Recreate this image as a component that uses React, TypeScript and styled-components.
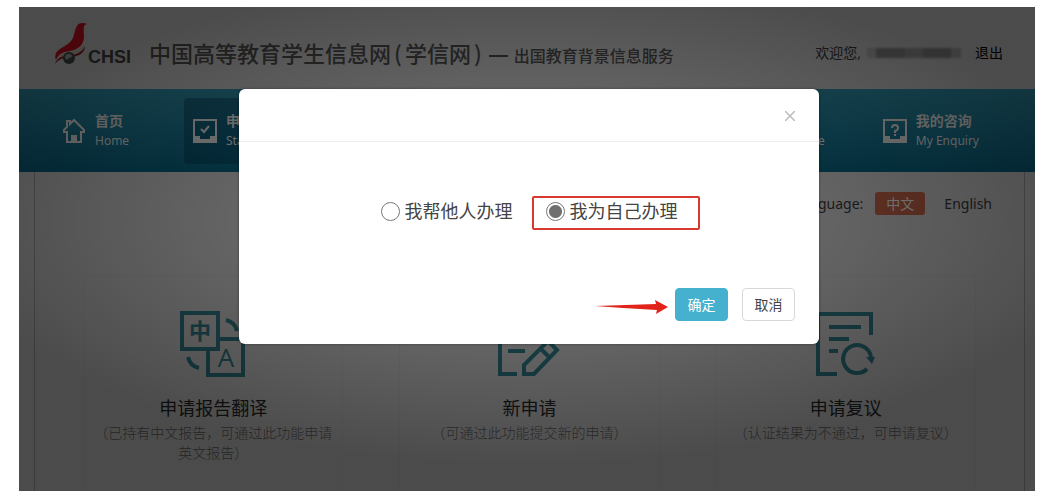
import React, { useState } from 'react';
import styled, { createGlobalStyle } from 'styled-components';

const GlobalStyle = createGlobalStyle`
  * { box-sizing: border-box; }
  body {
    margin: 0;
    background: #fff;
    font-family: "Noto Sans", "Noto Sans CJK SC", sans-serif;
    font-size: 14px;
    color: #333;
  }
  h1, h2, p { margin: 0; font-weight: 400; }
  button, input { font-family: inherit; }
`;

const Frame = styled.div`
  position: relative;
  margin: 7px 6px 4px 19px;
  background: #bcbcbc;
`;

const Header = styled.header`
  display: flex;
  align-items: flex-end;
  justify-content: space-between;
  height: 82px;
  padding: 0 32px 24px 36px;
`;

const Brand = styled.div`
  display: flex;
  align-items: flex-end;
  white-space: nowrap;
`;

const LogoName = styled.span`
  margin-right: 18px;
  font: bold 18px/16px "Liberation Sans", sans-serif;
  color: #3a3a3a;
`;

const SiteTitle = styled.h1`
  font-size: 22px;
  line-height: 26px;
  font-weight: 500;
  font-family: "Noto Sans CJK SC", sans-serif;
  color: #484848;
`;

const Paren = styled.span`
  padding: 0 3px;
`;

const Dash = styled.span`
  width: 19px;
  height: 2px;
  margin: 0 6px 8px 4px;
  background: #444;
`;

const SubTitle = styled.span`
  font-size: 16px;
  line-height: 20px;
  font-weight: 500;
  font-family: "Noto Sans CJK SC", sans-serif;
  color: #484848;
`;

const Account = styled.div`
  display: flex;
  align-items: center;
  line-height: 24px;
  color: #333;
  white-space: nowrap;
`;

const MaskedName = styled.span`
  width: 94px;
  height: 10px;
  margin: 0 14px 0 6px;
  filter: blur(1px);
  background: linear-gradient(90deg, #a4a4a4 0 9px, #7c7c7c 9px 38px, #8c8c8c 38px 56px, #7c7c7c 56px 84px, #999 84px);
`;

const Logout = styled.a`
  color: #000;
  text-decoration: none;
`;

const Nav = styled.nav`
  display: flex;
  gap: 40px;
  height: 83px;
  padding: 9px 47px 8px 34px;
  background: linear-gradient(#2a869e, #085a76);
`;

const NavItem = styled.a<{ $active?: boolean; $pushed?: boolean }>`
  display: flex;
  align-items: center;
  gap: 9px;
  min-width: 91px;
  padding: 0 9px;
  margin-left: ${(p) => (p.$pushed ? 'auto' : '0')};
  border-radius: 4px;
  background: ${(p) => (p.$active ? 'rgba(0, 50, 75, 0.4)' : 'transparent')};
  color: #d4d4d4;
  text-decoration: none;
  white-space: nowrap;
`;

const NavText = styled.span`
  display: flex;
  flex-direction: column;
  font-size: 12px;
  line-height: 20px;
`;

const NavName = styled.strong`
  font-size: 14px;
`;

const Main = styled.main`
  margin: 0 10px 0 15px;
  padding-top: 19px;
  border-left: 1px solid #939393;
  border-right: 1px solid #939393;
`;

const LanguageBar = styled.div`
  display: flex;
  align-items: center;
  justify-content: flex-end;
  height: 24px;
  padding-right: 32px;
  color: #333;
`;

const Language = styled.a<{ $current?: boolean }>`
  padding: 0 11px;
  margin-left: ${(p) => (p.$current ? '12px' : '8px')};
  margin-right: ${(p) => (p.$current ? '0' : '-11px')};
  line-height: 23px;
  border-radius: 3px;
  background: ${(p) => (p.$current ? '#b25b42' : 'transparent')};
  color: ${(p) => (p.$current ? '#ddd' : '#333')};
  text-decoration: none;
`;

const Cards = styled.section`
  display: grid;
  grid-template-columns: repeat(3, minmax(0, 1fr));
  gap: 56px;
  margin: 60px 48px 0;
`;

const Card = styled.article`
  display: flex;
  flex-direction: column;
  align-items: center;
  min-height: 216px;
  padding: 35px 7px 0;
  border: 1px solid #b6b6b6;
  border-bottom: 0;
  text-align: center;
`;

const CardTitle = styled.h2`
  margin-top: 18px;
  font-size: 18px;
  line-height: 26px;
  color: #222;
`;

const CardText = styled.p`
  margin-top: 1px;
  line-height: 20px;
  font-family: "Noto Sans CJK SC", sans-serif;
  font-weight: 300;
  color: #5c5c5c;
`;

const Overlay = styled.div`
  position: absolute;
  inset: 0;
  display: flex;
  align-items: flex-start;
  justify-content: center;
  padding: 82px 0 0 4px;
  background: radial-gradient(
    closest-side at 50% 44%,
    rgba(0, 0, 0, 0.45) 50%,
    rgba(0, 0, 0, 0.6) 115%
  );
`;

const Modal = styled.form`
  width: min(580px, 100%);
  background: #fff;
  border-radius: 6px;
  box-shadow: 0 0 3px rgba(0, 0, 0, 0.4);
`;

const ModalHeader = styled.div`
  display: flex;
  align-items: center;
  justify-content: flex-end;
  height: 53px;
  padding: 2px 22px 0 0;
  border-bottom: 1px solid #ececec;
`;

const CloseButton = styled.button`
  display: flex;
  padding: 2px;
  border: 0;
  background: none;
`;

const Choices = styled.div`
  display: flex;
  justify-content: center;
  gap: 19px;
  padding: 54px 0 58px 22px;
`;

const Choice = styled.label<{ $marked?: boolean }>`
  display: flex;
  align-items: center;
  gap: 5px;
  height: 34px;
  padding: ${(p) => (p.$marked ? '0 20px 4px 12px' : '0 0 4px')};
  border: ${(p) => (p.$marked ? '2px solid #d8392f' : '0 solid transparent')};
  border-radius: 2px;
  font-size: 18px;
  line-height: 24px;
  color: #444;
  white-space: nowrap;
`;

const Radio = styled.input`
  appearance: none;
  width: 19px;
  height: 19px;
  margin: 0;
  border: 1px solid #777;
  border-radius: 50%;
  background: #fff;
  &:checked {
    background: radial-gradient(circle, #707070 6px, #fff 7px);
  }
`;

const ModalFooter = styled.div`
  display: flex;
  align-items: center;
  justify-content: flex-end;
  padding: 0 24px 23px;
`;

const Button = styled.button<{ $primary?: boolean }>`
  width: 53px;
  height: 33px;
  margin-left: ${(p) => (p.$primary ? '7px' : '14px')};
  padding: 0 0 2px;
  border: 1px solid ${(p) => (p.$primary ? '#46b1ce' : '#d8d8d8')};
  border-radius: 4px;
  background: ${(p) => (p.$primary ? '#46b1ce' : '#fff')};
  color: ${(p) => (p.$primary ? '#fff' : '#444')};
  font-size: 14px;
`;

const BirdLogo = () => (
  <svg width="33" height="43" viewBox="0 0 33 43" aria-hidden="true">
    <path d="M32 2 C28 0 23 1 22 4 C19 8 20 15 16 19 C12 24 4 26 1 31 C0 34 0 36 1 38 C4 31 9 30 15 29 C21 28 26 25 28 20 C30 15 28 10 29 5 C29 3 30 3 32 2Z" fill="#b80f1b" />
    <path d="M1 38 C3 33 8 31 16 30 C22 29 26 27 29 22 C29 28 24 31 17 32 C9 33 4 34 1 38Z" fill="#b9a78c" />
    <path d="M0 42 C2 35 9 33 17 33 C23 32 28 29 30 24 C30 31 24 34 17 35 C9 35 4 37 0 42Z" fill="#7d1a1a" />
    <circle cx="14" cy="36" r="6" fill="#3a4643" />
    <path d="M10 35 C11 31 16 31 17 34 C17 36 14 35 13 37 C12 39 10 37 10 35Z" fill="#8b9b94" />
  </svg>
);

const HomeIcon = () => (
  <svg width="24" height="26" viewBox="0 0 24 26" fill="none" stroke="currentColor" strokeWidth="2" aria-hidden="true">
    <path d="M6 14 H2 V12 L5 9 V3 H8 V6 L12 2 L22 12 V14 H19 V24 H5 V14" />
    <path d="M10 24 V18 H14 V24Z" fill="currentColor" />
  </svg>
);

const TrayIcon = ({ children }: { children: React.ReactNode }) => (
  <svg width="24" height="24" viewBox="0 0 24 24" fill="none" stroke="currentColor" strokeWidth="2" aria-hidden="true">
    <rect x="1" y="1" width="22" height="22" />
    <path d="M2 17 H7 V20 H17 V17 H22 V22 H2Z" fill="currentColor" stroke="none" />
    {children}
  </svg>
);

const TranslateIcon = () => (
  <svg width="66" height="66" viewBox="0 0 66 66" fill="none" stroke="#2a707c" strokeWidth="4" aria-hidden="true">
    <rect x="2" y="2" width="36" height="36" />
    <path d="M40 28 H63 V64 H28 V40" />
    <path d="M46 9 Q55 11 57 20" />
    <path d="M8 46 Q10 55 19 57" />
    <text x="20" y="28" textAnchor="middle" fontSize="22" fontWeight="700" fontFamily="Noto Sans CJK SC" fill="#2a707c" stroke="none">中</text>
    <text x="46" y="56" textAnchor="middle" fontSize="26" fontWeight="500" fontFamily="Open Sans" fill="#2a707c" stroke="none">A</text>
  </svg>
);

const EditIcon = () => (
  <svg width="66" height="66" viewBox="0 0 66 66" fill="none" stroke="#2a707c" strokeWidth="4" aria-hidden="true">
    <path d="M50 18 V3 H4 V63 H21" />
    <path d="M12 16 H38 M12 28 H32 M12 40 H29" />
    <path d="M28 63 V54 L52 30 L61 39 L38 63Z M44 37 L54 47" />
  </svg>
);

const ReviewIcon = () => (
  <svg width="66" height="66" viewBox="0 0 66 66" fill="none" stroke="#2a707c" strokeWidth="4" aria-hidden="true">
    <path d="M58 24 V3 H5 V63 H24" />
    <path d="M16 16 H48 M16 28 H36 M16 40 H25" />
    <path d="M54 58 A14 14 0 1 1 58 46" />
    <path d="M53 46 H62 L59 53Z" fill="#2a707c" stroke="none" />
  </svg>
);

const Arrow = () => (
  <svg width="73" height="18" viewBox="0 0 73 18" aria-hidden="true">
    <path d="M0 10 L61 8 L60 4 L73 11 L61 18 L62 14 L28 12Z" fill="#e2231a" />
  </svg>
);

const cards = [
  { title: '申请报告翻译', text: '（已持有中文报告，可通过此功能申请英文报告）', icon: <TranslateIcon /> },
  { title: '新申请', text: '（可通过此功能提交新的申请）', icon: <EditIcon /> },
  { title: '申请复议', text: '（认证结果为不通过，可申请复议）', icon: <ReviewIcon /> },
];

export default function App() {
  const [who, setWho] = useState('self');

  return (
    <>
      <GlobalStyle />
      <Frame>
        <Header>
          <Brand>
            <BirdLogo />
            <LogoName>CHSI</LogoName>
            <SiteTitle>
              中国高等教育学生信息网<Paren>(</Paren>学信网<Paren>)</Paren>
            </SiteTitle>
            <Dash />
            <SubTitle>出国教育背景信息服务</SubTitle>
          </Brand>
          <Account>
            欢迎您,
            <MaskedName />
            <Logout href="#logout">退出</Logout>
          </Account>
        </Header>

        <Nav>
          <NavItem href="#home">
            <HomeIcon />
            <NavText><NavName>首页</NavName>Home</NavText>
          </NavItem>
          <NavItem href="#start" $active>
            <TrayIcon><path d="M8 10 L11 13 L16 7" /></TrayIcon>
            <NavText><NavName>申请</NavName>Start</NavText>
          </NavItem>
          <NavItem href="#guide" $pushed>
            <TrayIcon><path d="M7 8 H17 M7 12 H17" /></TrayIcon>
            <NavText><NavName>指南</NavName>User Guide</NavText>
          </NavItem>
          <NavItem href="#enquiry">
            <TrayIcon>
              <path d="M9 9 Q9 6 12 6 Q15 6 15 9 Q15 11 12 12 V14 M12 15 V17" />
            </TrayIcon>
            <NavText><NavName>我的咨询</NavName>My Enquiry</NavText>
          </NavItem>
        </Nav>

        <Main>
          <LanguageBar>
            Language:
            <Language href="#zh" $current>中文</Language>
            <Language href="#en">English</Language>
          </LanguageBar>
          <Cards>
            {cards.map((card) => (
              <Card key={card.title}>
                {card.icon}
                <CardTitle>{card.title}</CardTitle>
                <CardText>{card.text}</CardText>
              </Card>
            ))}
          </Cards>
        </Main>

        <Overlay>
          <Modal onSubmit={(e) => e.preventDefault()}>
            <ModalHeader>
              <CloseButton type="button" aria-label="关闭">
                <svg width="10" height="10" viewBox="0 0 10 10" stroke="#bbb" strokeWidth="1.5">
                  <path d="M0 0 L10 10 M10 0 L0 10" />
                </svg>
              </CloseButton>
            </ModalHeader>
            <Choices>
              <Choice>
                <Radio type="radio" name="who" checked={who === 'other'} onChange={() => setWho('other')} />
                我帮他人办理
              </Choice>
              <Choice $marked>
                <Radio type="radio" name="who" checked={who === 'self'} onChange={() => setWho('self')} />
                我为自己办理
              </Choice>
            </Choices>
            <ModalFooter>
              <Arrow />
              <Button type="submit" $primary>确定</Button>
              <Button type="button">取消</Button>
            </ModalFooter>
          </Modal>
        </Overlay>
      </Frame>
    </>
  );
}
